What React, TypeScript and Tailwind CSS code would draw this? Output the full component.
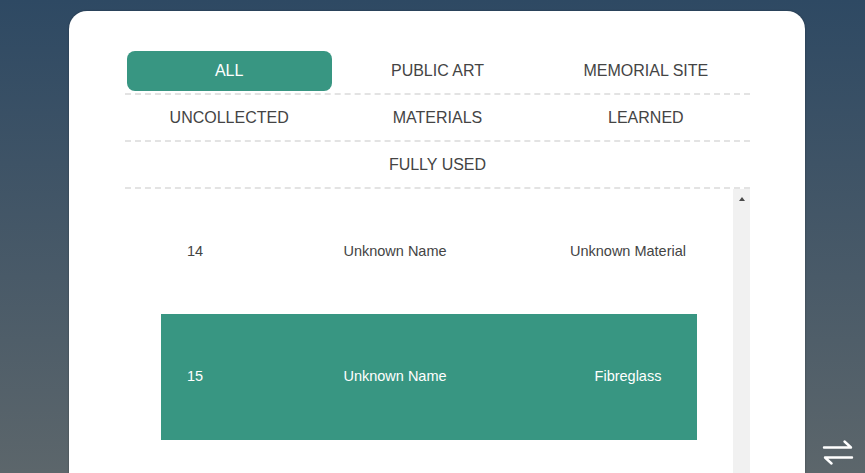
const tabRows: string[][] = [
  ["ALL", "PUBLIC ART", "MEMORIAL SITE"],
  ["UNCOLLECTED", "MATERIALS", "LEARNED"],
  ["", "FULLY USED", ""],
];

const items = [
  { id: 14, name: "Unknown Name", material: "Unknown Material" },
  { id: 15, name: "Unknown Name", material: "Fibreglass" },
];

function SwitchIcon() {
  return (
    <svg viewBox="0 0 32 26" className="h-[26px] w-[32px]" fill="none" stroke="white" strokeWidth="2.4" strokeLinecap="round" strokeLinejoin="round">
      <path d="M2 8.5 H29 L22.5 2.5" />
      <path d="M30 18.5 H3 L9.5 24.5" />
    </svg>
  );
}

export default function App() {
  const active = "ALL";
  const selected = 15;

  return (
    <div className="flex h-[473px] w-full items-end overflow-hidden bg-gradient-to-b from-[#2e4963] to-[#5c666b] font-['Liberation_Sans',Arial,sans-serif]">
      <div className="ml-[69px] flex h-[462px] w-[736px] flex-col overflow-hidden rounded-t-[18px] bg-white pl-[56px] pr-[55px] pt-[37px] shadow-[0_0_2px_rgba(0,0,0,0.35)]">
        <div className="flex flex-col">
          {tabRows.map((row, i) => (
            <div key={i} className="grid grid-cols-3 border-b-2 border-dashed border-[#e3e3e3]">
              {row.map((label, j) => (
                <div key={j} className="flex h-[45px] items-center justify-center">
                  {label === active ? (
                    <div className="flex h-[40px] w-[205px] items-center justify-center rounded-[8px] bg-[#389682] text-[16px] text-white">
                      {label}
                    </div>
                  ) : (
                    <span className="text-[16px] text-[#444]">{label}</span>
                  )}
                </div>
              ))}
            </div>
          ))}
        </div>

        <div className="flex min-h-0 flex-1">
          <div className="flex flex-1 flex-col px-[36px]">
            {items.map((it, i) => {
              const on = it.id === selected;
              return (
                <div
                  key={it.id}
                  className={
                    (i === 0 ? "h-[125px] " : "h-[126px] ") +
                    (on
                      ? "grid shrink-0 grid-cols-[69px_330px_136px] items-center bg-[#389682] text-[14.5px] text-white"
                      : "grid shrink-0 grid-cols-[69px_330px_136px] items-center text-[14.5px] text-[#444]")
                  }
                >
                  <span className="pl-[26px]">{it.id}</span>
                  <span className="text-center">{it.name}</span>
                  <span className="text-center">{it.material}</span>
                </div>
              );
            })}
          </div>
          <div className="flex w-[17px] shrink-0 justify-center bg-[#f1f1f1] pt-[8px]">
            <div className="h-0 w-0 border-x-[3.5px] border-b-[4px] border-x-transparent border-b-[#4a4a4a]" />
          </div>
        </div>
      </div>
      <div className="mb-[8px] ml-[17px]">
        <SwitchIcon />
      </div>
    </div>
  );
}
